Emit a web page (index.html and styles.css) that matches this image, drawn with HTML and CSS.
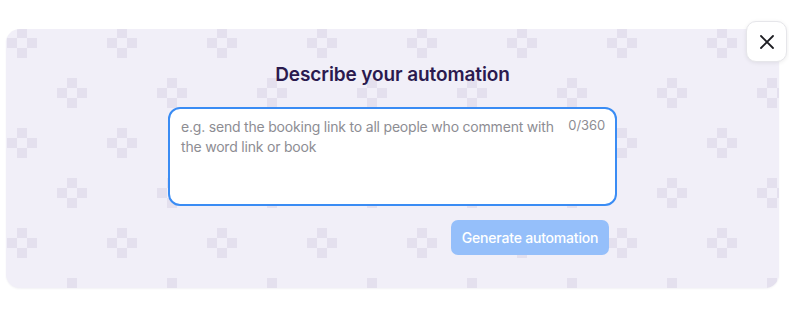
FILE: index.html
```html
<!DOCTYPE html>
<html lang="en">
<head>
<meta charset="utf-8">
<title>Describe your automation</title>
<link rel="stylesheet" href="styles.css">
</head>
<body>
<div class="modal">
  <div class="panel">
    <h2 class="title">Describe your automation</h2>
    <div class="field">
      <textarea class="input" placeholder="e.g. send the booking link to all people who comment with the word link or book"></textarea>
      <span class="counter">0/360</span>
    </div>
    <div class="actions">
      <button class="generate" disabled>Generate automation</button>
    </div>
  </div>
  <button class="close" aria-label="Close">
    <svg width="16" height="16" viewBox="0 0 16 16" fill="none" stroke="#1d1d22" stroke-width="1.8" stroke-linecap="round"><path d="M2 2L14 14M14 2L2 14"/></svg>
  </button>
</div>
</body>
</html>
```
FILE: styles.css
```css
* { box-sizing: border-box; }
html, body { margin: 0; padding: 0; background: #ffffff; }
body { font-family: Inter, "Noto Sans", sans-serif; width: 789px; height: 320px; overflow: hidden; }

.modal { position: relative; padding: 29px 10px 0 6px; }

.panel {
  height: 259px;
  border-radius: 14px;
  background-color: #f1eff8;
  background-image: url("data:image/svg+xml,%3Csvg xmlns='http://www.w3.org/2000/svg' width='100' height='100' fill='%23e4e0ee'%3E%3Crect x='10' y='0' width='10' height='10'/%3E%3Crect x='0' y='10' width='10' height='10'/%3E%3Crect x='20' y='10' width='10' height='10'/%3E%3Crect x='10' y='20' width='10' height='10'/%3E%3Crect x='60' y='50' width='10' height='10'/%3E%3Crect x='50' y='60' width='10' height='10'/%3E%3Crect x='70' y='60' width='10' height='10'/%3E%3Crect x='60' y='70' width='10' height='10'/%3E%3C/svg%3E");
  background-position: 1px -1px;
  box-shadow: 0 1px 2px rgba(40, 30, 80, 0.06);
  display: flex;
  flex-direction: column;
  align-items: center;
  padding-top: 34px;
}

.title {
  margin: 0 0 20px;
  font-size: 19px;
  line-height: 24px;
  font-weight: 600;
  color: #2b1a4f;
  letter-spacing: -0.1px;
}

.field { position: relative; width: 449px; height: 99px; }

.input {
  display: block;
  width: 100%;
  height: 100%;
  resize: none;
  border: 2px solid #3a8cf4;
  border-radius: 12px;
  background: #ffffff;
  outline: none;
  padding: 8px 52px 8px 11px;
  font-family: Inter, "Noto Sans", sans-serif;
  font-size: 14px;
  line-height: 20px;
  letter-spacing: -0.2px;
  color: #222;
}
.input::placeholder { color: #8d8d93; }

.counter {
  position: absolute;
  top: 10px;
  right: 12px;
  font-size: 13px;
  line-height: 16px;
  letter-spacing: -0.1px;
  color: #8d8d93;
}

.actions { width: 449px; display: flex; justify-content: flex-end; padding-right: 8px; margin-top: 14px; }

.generate {
  height: 35px;
  width: 158px;
  border: none;
  border-radius: 7px;
  background: #95bffa;
  color: #ffffff;
  font-family: Inter, "Noto Sans", sans-serif;
  font-size: 14px;
  font-weight: 500;
  letter-spacing: -0.2px;
  white-space: nowrap;
  padding: 0;
}

.close {
  position: absolute;
  top: 21px;
  left: 746px;
  width: 41px;
  height: 41px;
  border-radius: 10px;
  border: 1px solid #e6e6ea;
  background: #ffffff;
  box-shadow: 0 1px 4px rgba(0, 0, 0, 0.08);
  display: flex;
  align-items: center;
  justify-content: center;
  padding: 0;
}
```
